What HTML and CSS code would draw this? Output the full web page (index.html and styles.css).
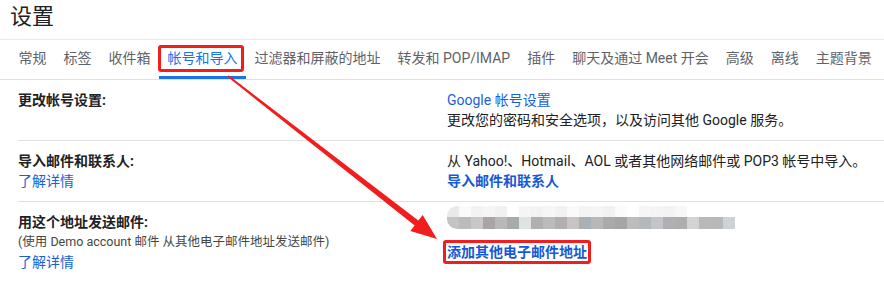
FILE: index.html
```html
<!DOCTYPE html>
<html lang="zh-CN">
  <head>
    <meta charset="UTF-8" />
    <meta name="viewport" content="width=device-width, initial-scale=1.0" />
    <title>设置</title>
    <link rel="stylesheet" href="styles.css">
  </head>
  <body>
    <div class="page">
      <h1 class="title">设置</h1>

      <nav class="tabs">
        <a class="tab">常规</a>
        <a class="tab">标签</a>
        <a class="tab">收件箱</a>
        <a class="tab active">帐号和导入</a>
        <a class="tab">过滤器和屏蔽的地址</a>
        <a class="tab">转发和 POP/IMAP</a>
        <a class="tab">插件</a>
        <a class="tab">聊天及通过 Meet 开会</a>
        <a class="tab">高级</a>
        <a class="tab">离线</a>
        <a class="tab">主题背景</a>
      </nav>

      <div class="rows">
        <div class="row">
          <div class="label">
            <div class="label-title">更改帐号设置:</div>
          </div>
          <div class="value">
            <a class="link">Google 帐号设置</a>
            <div>更改您的密码和安全选项，以及访问其他 Google 服务。</div>
          </div>
        </div>

        <div class="row">
          <div class="label">
            <div class="label-title">导入邮件和联系人:</div>
            <a class="link">了解详情</a>
          </div>
          <div class="value">
            <div>从 Yahoo!、Hotmail、AOL 或者其他网络邮件或 POP3 帐号中导入。</div>
            <a class="link strong">导入邮件和联系人</a>
          </div>
        </div>

        <div class="row last">
          <div class="label">
            <div class="label-title">用这个地址发送邮件:</div>
            <div class="note">(使用 Demo account 邮件 从其他电子邮件地址发送邮件)</div>
            <a class="link">了解详情</a>
          </div>
          <div class="value">
            <div class="blurred">
              <div class="blur-top"></div>
              <div class="blur-bottom"></div>
            </div>
            <a class="link strong marked">添加其他电子邮件地址</a>
          </div>
        </div>
      </div>

      <!-- 标注箭头 -->
      <svg class="arrow" width="884" height="281" viewBox="0 0 884 281">
        <polygon
          points="228.6,75.2 418.3,220.6 422.7,215.1 437,239 410.3,230.9 414.7,225.4 227.4,76.8"
          fill="#f21d1d"
        />
      </svg>
    </div>
  </body>
</html>
```

FILE: styles.css
```css
body,
html {
  margin: 0;
  padding: 0;
  background: #fff;
  font-family: Roboto, "Noto Sans CJK SC", sans-serif;
  color: #202124;
  overflow: hidden;
}

.page {
  position: relative;
  width: 884px;
  height: 281px;
}

.title {
  margin: 0;
  padding: 0 0 6px 10px;
  font-size: 22px;
  font-weight: 400;
  line-height: 33px;
  color: #202124;
  border-bottom: 1px solid #e8eaed;
}

.tabs {
  display: flex;
  padding-left: 10px;
  white-space: nowrap;
  overflow: hidden;
  border-bottom: 1px solid #e0e0e0;
}

.tab {
  position: relative;
  padding: 0 8.5px;
  font-size: 14px;
  line-height: 36px;
  color: #5f6368;
  border-bottom: 3px solid transparent;
}

.tab.active {
  color: #1a73e8;
  border-bottom-color: #1a73e8;
}

/* 截图里的红色标注框 */
.tab.active::before {
  content: "";
  position: absolute;
  left: -1px;
  right: 2px;
  top: 5px;
  bottom: 4px;
  border: 3px solid #f21d1d;
  border-radius: 3px;
}

.rows {
  padding-left: 18px;
}

.row {
  display: flex;
  padding: 10px 0;
  border-bottom: 1px solid #e0e0e0;
  font-size: 14px;
  line-height: 20px;
}

.row.last {
  border-bottom: none;
}

.label {
  width: 429px;
  flex-shrink: 0;
}

.label-title {
  font-weight: 700;
  color: #202124;
}

.value {
  flex: 1;
}

.link {
  display: block;
  color: #1a5fd8;
  text-decoration: none;
}

.link.strong {
  font-weight: 700;
  color: #1558d6;
}

.note {
  font-size: 12.5px;
  color: #444746;
}

.blurred {
  width: 288px;
  margin-top: -6px;
  border-radius: 10px 0 0 10px;
  overflow: hidden;
}

.blur-top {
  height: 11px;
  background: linear-gradient(
    90deg,
    #e9e9e9 0 12px,
    #fafafa 12px 24px,
    #f3f3f3 24px 36px,
    #f6f6f6 36px 48px,
    #f1f1f1 48px 60px,
    #ffffff 60px 72px,
    #f5f5f5 72px 84px,
    #f3f3f3 84px 96px,
    #f6f6f6 96px 108px,
    #f2f2f2 108px 120px,
    #fafafa 120px 132px,
    #f4f4f4 132px 144px,
    #f5f5f5 144px 156px,
    #f2f2f2 156px 168px,
    #fbfbfb 168px 180px,
    #ffffff 180px 192px,
    #f6f6f6 192px 204px,
    #f4f4f4 204px 216px,
    #f3f3f3 216px 228px,
    #f7f7f7 228px 240px,
    #ffffff 240px 288px
  );
}

.blur-bottom {
  height: 12px;
  background: linear-gradient(
    90deg,
    #c4c4c4 0 12px,
    #bbbbbb 12px 24px,
    #c8c8cc 24px 36px,
    #aaa5a3 36px 48px,
    #b8b9bb 48px 60px,
    #a8abad 60px 72px,
    #e1e3e3 72px 84px,
    #b0b0b0 84px 96px,
    #bbbbbb 96px 108px,
    #b0b0b2 108px 120px,
    #c9c4c2 120px 132px,
    #aab0b5 132px 144px,
    #b8b8bb 144px 156px,
    #a8aaac 156px 168px,
    #a5a5a5 168px 180px,
    #babcbe 180px 192px,
    #b5b8ba 192px 204px,
    #c3c6c8 204px 216px,
    #b0b0b2 216px 228px,
    #aeaeb0 228px 240px,
    #d2d4d4 240px 252px,
    #bbb8b6 252px 264px,
    #b8b8b8 264px 276px,
    #ced2d5 276px 288px
  );
}

.marked {
  position: relative;
  display: inline-block;
  margin-top: 13px;
}

.marked::before {
  content: "";
  position: absolute;
  left: -4px;
  right: -4px;
  top: -2px;
  bottom: -2px;
  border: 3px solid #f21d1d;
  border-radius: 3px;
}

.arrow {
  position: absolute;
  left: 0;
  top: 0;
  pointer-events: none;
}
```
